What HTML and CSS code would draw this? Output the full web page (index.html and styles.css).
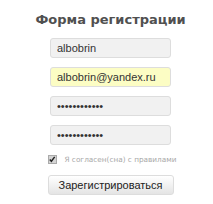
FILE: index.html
```html
<!DOCTYPE html>
<html lang="ru">

<head>
    <meta charset="UTF-8">
    <meta name="viewport" content="width=device-width, initial-scale=1.0">
    <title>Регистрация</title>
    <link rel="stylesheet" href="styles.css">
</head>

<body>
    <form class="reg-form">
        <h1 class="reg-title">Форма регистрации</h1>

        <input class="field" type="text" value="albobrin">
        <input class="field field-filled" type="text" value="albobrin@yandex.ru">
        <input class="field" type="password" value="passwordpass">
        <input class="field" type="password" value="passwordpass">

        <label class="agree">
            <span class="check">
                <svg width="9" height="9" viewBox="0 0 9 9">
                    <path d="M2 4.5 L3.8 6.5 L7.5 1.5" fill="none" stroke="#222" stroke-width="1.6"/>
                </svg>
            </span>
            Я согласен(сна) с правилами
        </label>

        <button class="submit" type="button">Зарегистрироваться</button>
    </form>
</body>

</html>
```

FILE: styles.css
```css
body {
    margin: 0 0 0 8px;
    padding: 0;
    background-color: #ffffff;
}

.reg-form {
    width: 205px;
    display: flex;
    flex-direction: column;
    align-items: center;
    padding-top: 12px;
}

.reg-title {
    margin: 0 0 10px 0;
    font-family: 'DejaVu Sans', sans-serif;
    font-size: 13px;
    line-height: 16px;
    font-weight: bold;
    color: #505050;
}

.field {
    box-sizing: border-box;
    width: 121px;
    height: 20px;
    margin: 0 0 9px 0;
    padding: 0 6px;
    border: 1px solid #dddddd;
    border-radius: 3px;
    background-color: #f1f1f1;
    font-family: 'Liberation Sans', Arial, sans-serif;
    font-size: 11px;
    color: #333333;
    outline: none;
}

.field-filled {
    background-color: #fcfdc4;
}

.agree {
    display: flex;
    align-items: center;
    gap: 7px;
    height: 14px;
    margin-top: -2px;
    margin-left: 4px;
    font-family: 'DejaVu Sans', Verdana, sans-serif;
    font-size: 7.3px;
    color: #a8a8a8;
}

.check {
    box-sizing: border-box;
    width: 9px;
    height: 9px;
    border: 1px solid #aaaaaa;
    background-color: #d4d4d4;
    display: flex;
}

.check svg {
    margin: -1px 0 0 -1px;
}

.submit {
    box-sizing: border-box;
    width: 126px;
    height: 20px;
    margin-top: 9px;
    padding: 0;
    border: 1px solid #dddddd;
    border-radius: 3px;
    background: linear-gradient(#ffffff, #e4e4e4);
    font-family: 'Liberation Sans', Arial, sans-serif;
    font-size: 11px;
    color: #222222;
}
```
